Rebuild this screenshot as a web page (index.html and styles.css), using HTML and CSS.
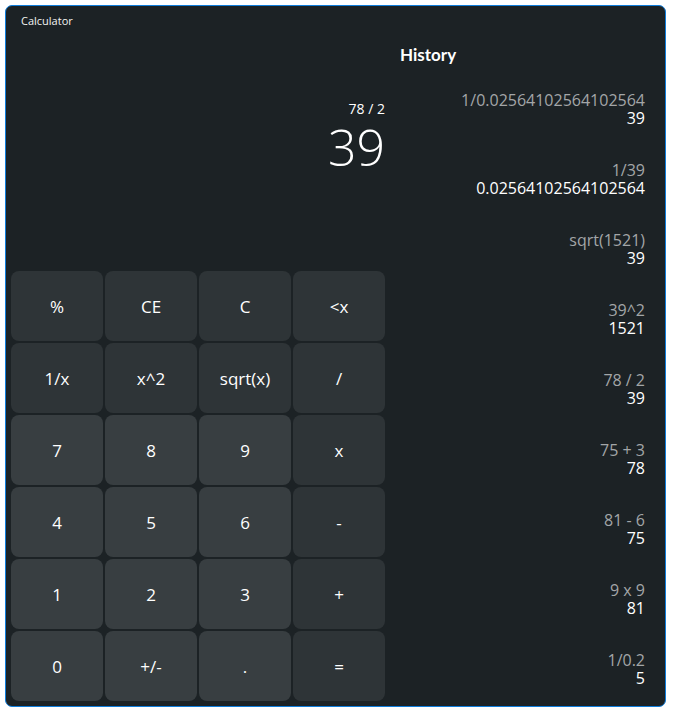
FILE: index.html
```html
<!DOCTYPE html>
<html>
<head>
<meta charset="utf-8">
<link rel="stylesheet" href="styles.css">
</head>
<body>
<div class="window">
  <div class="calc">
    <div class="app-title">Calculator</div>
    <div class="display">
      <div class="expr">78 / 2</div>
      <div class="value">39</div>
    </div>
    <div class="keypad">
      <button class="key op">%</button>
      <button class="key op">CE</button>
      <button class="key op">C</button>
      <button class="key op">&lt;x</button>
      <button class="key op">1/x</button>
      <button class="key op">x^2</button>
      <button class="key op">sqrt(x)</button>
      <button class="key op">/</button>
      <button class="key num">7</button>
      <button class="key num">8</button>
      <button class="key num">9</button>
      <button class="key op">x</button>
      <button class="key num">4</button>
      <button class="key num">5</button>
      <button class="key num">6</button>
      <button class="key op">-</button>
      <button class="key num">1</button>
      <button class="key num">2</button>
      <button class="key num">3</button>
      <button class="key op">+</button>
      <button class="key num">0</button>
      <button class="key num">+/-</button>
      <button class="key num">.</button>
      <button class="key op">=</button>
    </div>
  </div>
  <div class="history">
    <div class="history-title">History</div>
    <div class="items">
      <div class="item"><div class="h-expr">1/0.02564102564102564</div><div class="h-res">39</div></div>
      <div class="item"><div class="h-expr">1/39</div><div class="h-res">0.02564102564102564</div></div>
      <div class="item"><div class="h-expr">sqrt(1521)</div><div class="h-res">39</div></div>
      <div class="item"><div class="h-expr">39^2</div><div class="h-res">1521</div></div>
      <div class="item"><div class="h-expr">78 / 2</div><div class="h-res">39</div></div>
      <div class="item"><div class="h-expr">75 + 3</div><div class="h-res">78</div></div>
      <div class="item"><div class="h-expr">81 - 6</div><div class="h-res">75</div></div>
      <div class="item"><div class="h-expr">9 x 9</div><div class="h-res">81</div></div>
      <div class="item"><div class="h-expr">1/0.2</div><div class="h-res">5</div></div>
    </div>
  </div>
</div>
</body>
</html>
```

FILE: styles.css
```css
* { box-sizing: border-box; }
html, body { margin: 0; padding: 0; background: #ffffff; }
body { padding: 5px 0 0 5px; font-family: "Open Sans", "Liberation Sans", sans-serif; }

.window {
  width: 661px;
  height: 702px;
  border: 1px solid #0f7ddb;
  border-radius: 7px;
  background: #1c2225;
  display: flex;
  overflow: hidden;
  color: #ffffff;
}

.calc {
  width: 380px;
  padding: 0 1px 5px 5px;
  display: flex;
  flex-direction: column;
}

.app-title {
  font-size: 11px;
  line-height: 16px;
  padding: 7px 0 0 10px;
  color: #f2f2f2;
}

.display {
  flex: 1;
  display: flex;
  flex-direction: column;
  align-items: flex-end;
  padding-top: 70px;
}

.expr {
  font-size: 14px;
  line-height: 20px;
}

.value {
  font-size: 50px;
  font-weight: 300;
  line-height: 56px;
  margin-top: 0;
}

.keypad {
  display: grid;
  grid-template-columns: repeat(4, 92px);
  grid-template-rows: repeat(6, 70px);
  gap: 2px;
}

.key {
  border: none;
  border-radius: 8px;
  color: #ffffff;
  font-family: "Open Sans", "Liberation Sans", sans-serif;
  font-size: 17px;
  padding: 0;
  margin: 0;
}

.key.op { background: #2e3437; }
.key.num { background: #383e41; }

.history {
  flex: 1;
  padding: 37px 20px 0 14px;
  display: flex;
  flex-direction: column;
}

.history-title {
  font-family: "Lato", "Open Sans", sans-serif;
  font-weight: 700;
  font-size: 17px;
  line-height: 24px;
}

.items {
  margin-top: 24px;
  display: flex;
  flex-direction: column;
  gap: 34px;
}

.item {
  text-align: right;
  font-size: 16px;
  line-height: 18px;
}

.h-expr { color: #a3a6a8; }
.h-res { color: #ffffff; }
```
